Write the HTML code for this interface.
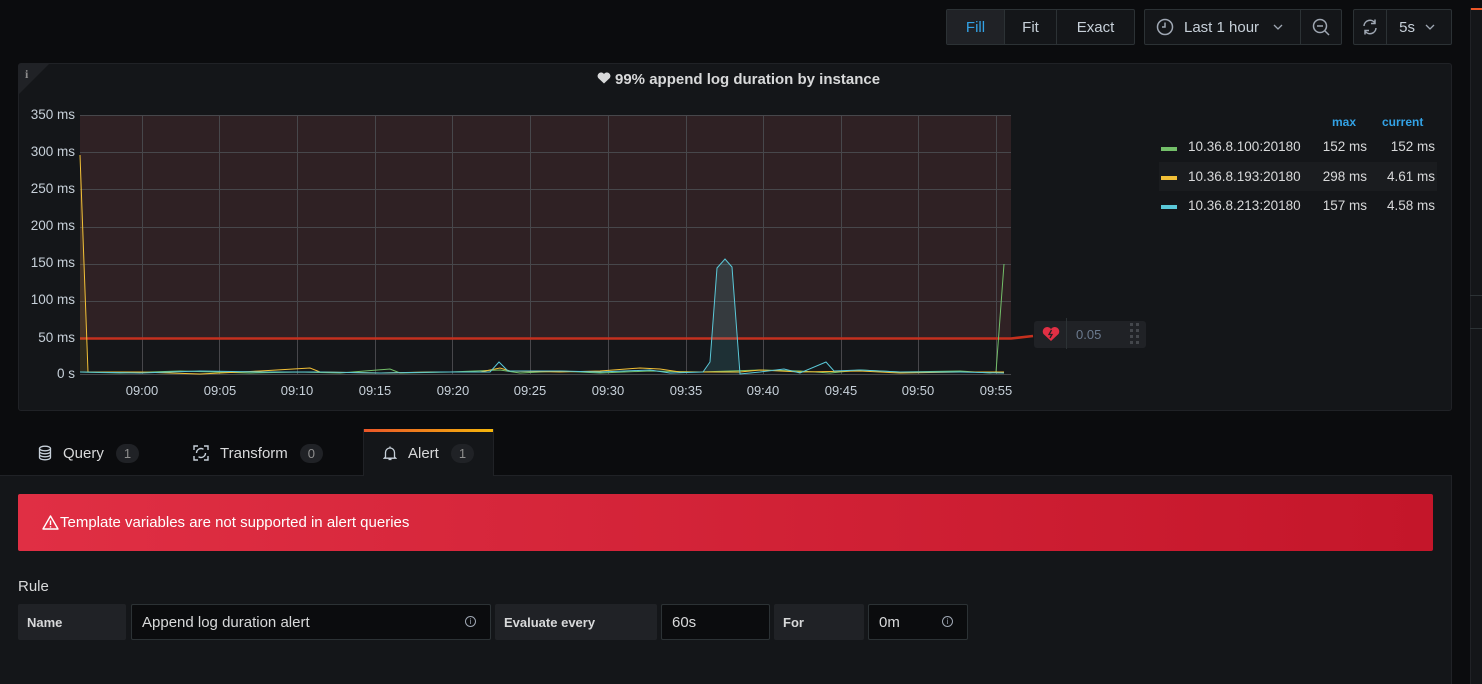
<!DOCTYPE html>
<html><head><meta charset="utf-8">
<style>
*{box-sizing:border-box;margin:0;padding:0}
body{width:1482px;height:684px;background:#0b0c0e;font-family:"Liberation Sans",sans-serif;color:#d8d9da;position:relative;overflow:hidden;font-size:14px}
.abs{position:absolute}
.btn{position:absolute;top:9px;height:36px;border:1px solid #2c3235;background:#141619;border-radius:2px;color:#c7d0d9;font-size:15px;display:flex;align-items:center}
.btn span{padding:0 16px;height:100%;display:flex;align-items:center;border-right:1px solid #2c3235}
.btn span:last-child{border-right:none}
.panel{left:18px;top:63px;width:1434px;height:348px;background:#141619;border:1px solid #202226;border-radius:3px}
.ylab{position:absolute;right:1407px;font-size:13.5px;color:#c7d0d9;text-align:right;width:60px}
.xlab{position:absolute;top:383px;font-size:13px;color:#c7d0d9;width:50px;text-align:center}
.leg{position:absolute;font-size:13.5px;color:#d8d9da}
.tab{position:absolute;top:430px;height:46px;display:flex;align-items:center;font-size:15px;color:#d8d9da}
.badge{display:inline-block;background:#202226;color:#8e8e8e;border-radius:10px;padding:2px 8px;font-size:13px;margin-left:12px}
.lab{position:absolute;top:604px;height:36px;background:#202226;border-radius:2px;font-size:13px;font-weight:bold;color:#d8d9da;display:flex;align-items:center;padding-left:9px}
.inp{position:absolute;top:604px;height:36px;background:#0b0c0e;border:1px solid #2c3235;border-radius:2px;font-size:15px;color:#d8d9da;display:flex;align-items:center;padding-left:10px}
.info{position:absolute;right:14px;top:11px;width:11px;height:11px;border:1px solid #9fa7b3;border-radius:50%;font-size:8px;line-height:9px;text-align:center;color:#9fa7b3}
</style></head><body>

<div class="btn" style="left:946px;width:189px"><span style="color:#33a2e5;background:#202226;width:58px;justify-content:center">Fill</span><span style="width:52px;justify-content:center">Fit</span><span style="flex:1;justify-content:center">Exact</span></div>
<div class="btn" style="left:1144px;width:198px"><span style="width:156px;padding-left:11px">
<svg width="18" height="18" viewBox="0 0 18 18" style="margin-right:10px"><circle cx="9" cy="9" r="7.5" fill="none" stroke="#9fa7b3" stroke-width="1.5"/><path d="M9 4.5V9H6" fill="none" stroke="#9fa7b3" stroke-width="1.5"/></svg>Last 1 hour<svg width="10" height="8" style="margin-left:14px"><path d="M1 2l4 4 4-4" fill="none" stroke="#9fa7b3" stroke-width="1.3"/></svg></span><span style="flex:1;justify-content:center;padding:0"><svg width="18" height="18"><circle cx="8" cy="8" r="6.5" fill="none" stroke="#9fa7b3" stroke-width="1.5"/><path d="M5 8h6M13 13l4 4" stroke="#9fa7b3" stroke-width="1.5"/></svg></span></div>
<div class="btn" style="left:1353px;width:99px"><span style="width:38px;justify-content:center;padding:0"><svg width="18" height="18"><path d="M3 8a6 6 0 0 1 11-3M15 10a6 6 0 0 1-11 3M14 1.5v4h-4M4 16.5v-4h4" fill="none" stroke="#9fa7b3" stroke-width="1.5"/></svg></span><span style="flex:1;padding-left:12px">5s<svg width="10" height="8" style="margin-left:10px"><path d="M1 2l4 4 4-4" fill="none" stroke="#9fa7b3" stroke-width="1.3"/></svg></span></div>

<div class="abs" style="left:1470px;top:8px;width:12px;height:676px;background:#141619;border-left:1px solid #202226"></div>
<div class="abs" style="left:1471px;top:8px;width:11px;height:2px;background:#eb5628"></div>
<div class="abs" style="left:1470px;top:295px;width:12px;height:1px;background:#2c3235"></div>
<div class="abs" style="left:1470px;top:328px;width:12px;height:1px;background:#2c3235"></div>

<div class="abs panel"></div>
<svg class="abs" style="left:19px;top:64px" width="30" height="30"><path d="M0 0H30L0 30Z" fill="#202226"/><text x="6" y="14" font-family="Liberation Serif" font-weight="bold" font-size="12" fill="#8e8e8e">i</text></svg>
<div class="abs" style="left:597px;top:71px;font-size:15px;font-weight:bold;color:#d8d9da"><svg width="14" height="12" viewBox="0 0 14 12" style="margin-right:4px"><path d="M7 11.5L1.2 6A3.3 3.3 0 0 1 7 2a3.3 3.3 0 0 1 5.8 4Z" fill="#d8d9da"/></svg>99% append log duration by instance</div>

<div class="ylab" style="top:107px">350 ms</div>
<div class="ylab" style="top:144px">300 ms</div>
<div class="ylab" style="top:181px">250 ms</div>
<div class="ylab" style="top:218px">200 ms</div>
<div class="ylab" style="top:255px">150 ms</div>
<div class="ylab" style="top:292px">100 ms</div>
<div class="ylab" style="top:330px">50 ms</div>
<div class="ylab" style="top:366px">0 s</div>

<svg class="abs" style="left:0;top:0" width="1160" height="420">
<rect x="80" y="115" width="931" height="223" fill="#2f2124"/>
<g stroke="#47474b" stroke-width="1">
<path d="M80 115.5H1011M80 152.5H1011M80 189.5H1011M80 227.5H1011M80 264.5H1011M80 301.5H1011M80 374.5H1011"/>
<path d="M142.5 115V374M219.5 115V374M297.5 115V374M375.5 115V374M452.5 115V374M530.5 115V374M608.5 115V374M686.5 115V374M763.5 115V374M841.5 115V374M918.5 115V374M996.5 115V374"/>
</g>
<path d="M80 338.5H1011L1033 336" stroke="#c4301e" stroke-width="2.5" fill="none"/>
<path d="M80 155L88 372L80 372Z" fill="#f2c037" fill-opacity="0.12"/>
<path d="M703 372L710 362L717 268L725 259L732 267L740 374Z" fill="#5ac8d8" fill-opacity="0.15"/>
<polyline fill="none" stroke="#73bf69" stroke-width="1" points="80,372 120,373 180,371 250,373 300,372 340,373 390,369 400,373 450,372 500,370 520,373 560,371 600,373 650,371 700,372 760,370 800,371 830,373 860,370 900,372 960,371 990,373 996,372 1004,264"/>
<polyline fill="none" stroke="#f2c037" stroke-width="1" points="80,155 88,372 140,372 200,374 260,371 310,368 320,372 380,373 430,372 480,372 500,368 510,371 560,372 600,371 640,368 660,369 680,372 740,372 760,370 800,372 860,371 900,373 960,372 1004,372"/>
<polyline fill="none" stroke="#5ac8d8" stroke-width="1" points="80,372 140,373 200,371 260,372 320,372 380,373 440,372 490,372 499,362 508,371 560,371 600,372 650,370 670,373 703,372 710,362 717,268 725,259 732,267 740,374 760,372 784,369 800,373 826,362 834,371 860,370 900,372 960,372 1004,373"/>
</svg>

<div class="xlab" style="left:117px">09:00</div>
<div class="xlab" style="left:195px">09:05</div>
<div class="xlab" style="left:272px">09:10</div>
<div class="xlab" style="left:350px">09:15</div>
<div class="xlab" style="left:428px">09:20</div>
<div class="xlab" style="left:505px">09:25</div>
<div class="xlab" style="left:583px">09:30</div>
<div class="xlab" style="left:661px">09:35</div>
<div class="xlab" style="left:738px">09:40</div>
<div class="xlab" style="left:816px">09:45</div>
<div class="xlab" style="left:893px">09:50</div>
<div class="xlab" style="left:971px">09:55</div>

<div class="abs" style="left:1034px;top:321px;width:112px;height:27px;background:#202226;border-radius:3px"></div>
<div class="abs" style="left:1066px;top:318px;width:1px;height:31px;background:#2c3235"></div>
<svg class="abs" style="left:1042px;top:326px" width="18" height="16" viewBox="0 0 18 16"><path d="M9 15L1.5 8A4.2 4.2 0 0 1 9 3a4.2 4.2 0 0 1 7.5 5Z" fill="#e02f44"/><path d="M9.5 4L7 8.5h3L8 12" stroke="#202226" stroke-width="1.3" fill="none"/></svg>
<div class="abs" style="left:1076px;top:327px;font-size:13px;color:#6b7a8e">0.05</div>
<svg class="abs" style="left:1130px;top:323px" width="10" height="22"><g fill="#44474c"><rect x="0" y="0" width="3" height="3"/><rect x="6" y="0" width="3" height="3"/><rect x="0" y="6" width="3" height="3"/><rect x="6" y="6" width="3" height="3"/><rect x="0" y="12" width="3" height="3"/><rect x="6" y="12" width="3" height="3"/><rect x="0" y="18" width="3" height="3"/><rect x="6" y="18" width="3" height="3"/></g></svg>

<div class="leg" style="left:1332px;top:115px;color:#33a2e5;font-weight:bold;font-size:12px">max</div>
<div class="leg" style="left:1382px;top:115px;color:#33a2e5;font-weight:bold;font-size:12px">current</div>
<div class="abs" style="left:1159px;top:162px;width:278px;height:29px;background:#1a1c1f"></div>
<div class="abs" style="left:1161px;top:147px;width:16px;height:4px;background:#73bf69"></div>
<div class="abs" style="left:1161px;top:176px;width:16px;height:4px;background:#f2c037"></div>
<div class="abs" style="left:1161px;top:205px;width:16px;height:4px;background:#5ac8d8"></div>
<div class="leg" style="left:1188px;top:139px">10.36.8.100:20180</div>
<div class="leg" style="left:1188px;top:169px">10.36.8.193:20180</div>
<div class="leg" style="left:1188px;top:198px">10.36.8.213:20180</div>
<div class="leg" style="left:1300px;top:139px;width:67px;text-align:right">152 ms</div>
<div class="leg" style="left:1300px;top:169px;width:67px;text-align:right">298 ms</div>
<div class="leg" style="left:1300px;top:198px;width:67px;text-align:right">157 ms</div>
<div class="leg" style="left:1368px;top:139px;width:67px;text-align:right">152 ms</div>
<div class="leg" style="left:1368px;top:169px;width:67px;text-align:right">4.61 ms</div>
<div class="leg" style="left:1368px;top:198px;width:67px;text-align:right">4.58 ms</div>

<div class="abs" style="left:0;top:475px;width:1452px;height:209px;background:#141619;border-top:1px solid #202226;border-right:1px solid #202226"></div>
<div class="abs" style="left:363px;top:429px;width:131px;height:47px;background:#141619;border:1px solid #202226;border-bottom:none"></div>
<div class="abs" style="left:364px;top:429px;width:129px;height:3px;background:linear-gradient(90deg,#eb5628,#f5b60c)"></div>
<div class="tab" style="left:38px"><svg width="14" height="16" style="margin-right:11px" viewBox="0 0 14 16"><ellipse cx="7" cy="3.5" rx="5.5" ry="2.3" fill="none" stroke="#c7d0d9" stroke-width="1.3"/><path d="M1.5 3.5v9c0 1.3 2.5 2.3 5.5 2.3s5.5-1 5.5-2.3v-9M1.5 6.5c0 1.3 2.5 2.3 5.5 2.3s5.5-1 5.5-2.3M1.5 9.5c0 1.3 2.5 2.3 5.5 2.3s5.5-1 5.5-2.3" fill="none" stroke="#c7d0d9" stroke-width="1.3"/></svg>Query<span class="badge">1</span></div>
<div class="tab" style="left:193px"><svg width="16" height="16" style="margin-right:11px" viewBox="0 0 16 16"><path d="M1 5V1h4M11 1h4v4M15 11v4h-4M5 15H1v-4M3.5 8a4.5 4.5 0 0 1 7-3.7M12.5 8a4.5 4.5 0 0 1-7 3.7" fill="none" stroke="#c7d0d9" stroke-width="1.4"/></svg>Transform<span class="badge">0</span></div>
<div class="tab" style="left:383px"><svg width="14" height="16" style="margin-right:11px" viewBox="0 0 14 16"><path d="M2.5 12V7.5a4.5 4.5 0 0 1 9 0V12l1.2 1.2H1.3ZM5.5 14.5h3M7 1.5v1.5" fill="none" stroke="#c7d0d9" stroke-width="1.3"/></svg>Alert<span class="badge">1</span></div>

<div class="abs" style="left:18px;top:494px;width:1415px;height:57px;background:linear-gradient(90deg,#e02f44,#c4162a);border-radius:2px;color:#fff;font-size:15px;display:flex;align-items:center;padding-left:24px">
<svg width="17" height="15" viewBox="0 0 17 15" style="margin-right:1px"><path d="M8.5 1L16 14H1Z" fill="none" stroke="#fff" stroke-width="1.4" stroke-linejoin="round"/><path d="M8.5 5.5v4.5M8.5 11.3v1.2" stroke="#fff" stroke-width="1.4"/></svg>Template variables are not supported in alert queries</div>

<div class="abs" style="left:18px;top:578px;font-size:15px;color:#d8d9da">Rule</div>
<div class="lab" style="left:18px;width:108px">Name</div>
<div class="inp" style="left:131px;width:360px">Append log duration alert<span class="info">i</span></div>
<div class="lab" style="left:495px;width:162px">Evaluate every</div>
<div class="inp" style="left:661px;width:109px">60s</div>
<div class="lab" style="left:774px;width:90px">For</div>
<div class="inp" style="left:868px;width:100px">0m<span class="info">i</span></div>

</body></html>
